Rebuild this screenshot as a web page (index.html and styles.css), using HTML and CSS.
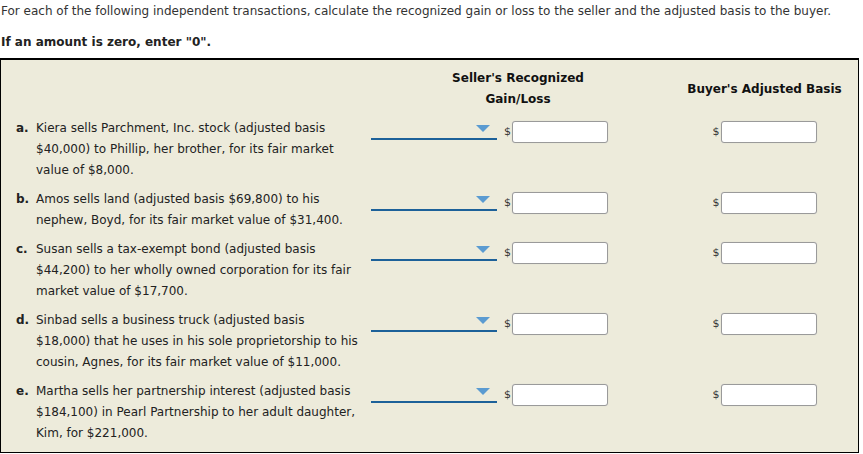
FILE: index.html
```html
<!DOCTYPE html>
<html>
<head>
<meta charset="utf-8">
<link rel="stylesheet" href="styles.css">
</head>
<body>
<p class="intro">For each of the following independent transactions, calculate the recognized gain or loss to the seller and the adjusted basis to the buyer.</p>
<p class="note">If an amount is zero, enter "0".</p>
<div class="box">
  <div class="grid">
    <div class="hcell blank"></div>
    <div class="hcell seller-h">Seller's Recognized<br>Gain/Loss</div>
    <div class="hcell buyer-h">Buyer's Adjusted Basis</div>

    <div class="item"><span class="lbl">a.</span><span class="txt">Kiera sells Parchment, Inc. stock (adjusted basis $40,000) to Phillip, her brother, for its fair market value of $8,000.</span></div>
    <div class="seller"><div class="dd"><span class="tri"></span></div><span class="dol">$</span><span class="inp"></span></div>
    <div class="buyer"><span class="dol">$</span><span class="inp"></span></div>

    <div class="item"><span class="lbl">b.</span><span class="txt">Amos sells land (adjusted basis $69,800) to his nephew, Boyd, for its fair market value of $31,400.</span></div>
    <div class="seller"><div class="dd"><span class="tri"></span></div><span class="dol">$</span><span class="inp"></span></div>
    <div class="buyer"><span class="dol">$</span><span class="inp"></span></div>

    <div class="item"><span class="lbl">c.</span><span class="txt">Susan sells a tax-exempt bond (adjusted basis $44,200) to her wholly owned corporation for its fair market value of $17,700.</span></div>
    <div class="seller"><div class="dd"><span class="tri"></span></div><span class="dol">$</span><span class="inp"></span></div>
    <div class="buyer"><span class="dol">$</span><span class="inp"></span></div>

    <div class="item"><span class="lbl">d.</span><span class="txt">Sinbad sells a business truck (adjusted basis $18,000) that he uses in his sole proprietorship to his cousin, Agnes, for its fair market value of $11,000.</span></div>
    <div class="seller"><div class="dd"><span class="tri"></span></div><span class="dol">$</span><span class="inp"></span></div>
    <div class="buyer"><span class="dol">$</span><span class="inp"></span></div>

    <div class="item"><span class="lbl">e.</span><span class="txt">Martha sells her partnership interest (adjusted basis $184,100) in Pearl Partnership to her adult daughter, Kim, for $221,000.</span></div>
    <div class="seller"><div class="dd"><span class="tri"></span></div><span class="dol">$</span><span class="inp"></span></div>
    <div class="buyer"><span class="dol">$</span><span class="inp"></span></div>
  </div>
</div>
</body>
</html>
```
FILE: styles.css
```css
html, body {
  margin: 0;
  padding: 0;
  background: #ffffff;
}
body {
  font-family: Verdana, "DejaVu Sans", sans-serif;
  font-size: 12px;
  line-height: 21px;
  color: #333333;
  width: 863px;
}
.intro {
  margin: 0;
  padding: 1px 0 0 1px;
}
.note {
  margin: 10px 0 5px 1px;
  font-weight: bold;
  color: #222;
}
.box {
  width: 857px;
  border: 1px solid #000;
  border-top-width: 2px;
  background: #edebdb;
  padding: 8px 0;
}
.grid {
  display: grid;
  grid-template-columns: 370px 294px 1fr;
  row-gap: 8px;
  color: #222;
}
.hcell {
  font-weight: bold;
  color: #111;
  text-align: center;
}
.buyer-h {
  align-self: center;
  padding-left: 6px;
}
.item {
  display: flex;
  padding-left: 15px;
}
.lbl {
  width: 20px;
  flex: none;
  font-weight: bold;
}
.txt {
  width: 323px;
}
.seller, .buyer {
  display: flex;
  align-items: flex-start;
  padding-top: 3px;
}
.buyer {
  justify-content: center;
  padding-left: 6px;
}
.dd {
  position: relative;
  width: 126px;
  height: 17px;
  border-bottom: 2px solid #1d6199;
  margin-right: 7px;
  flex: none;
}
.tri {
  position: absolute;
  right: 7px;
  top: 4px;
  width: 0;
  height: 0;
  border-left: 7px solid transparent;
  border-right: 7px solid transparent;
  border-top: 7px solid #5b9bd1;
}
.dol {
  line-height: 22px;
  width: 8px;
  flex: none;
  color: #333;
  font-size: 11px;
}
.inp {
  display: block;
  width: 94px;
  height: 20px;
  background: #fff;
  border: 1px solid #9a9a9a;
  border-radius: 3px;
  box-shadow: 0 0 1px #c8c8c8;
}
```
